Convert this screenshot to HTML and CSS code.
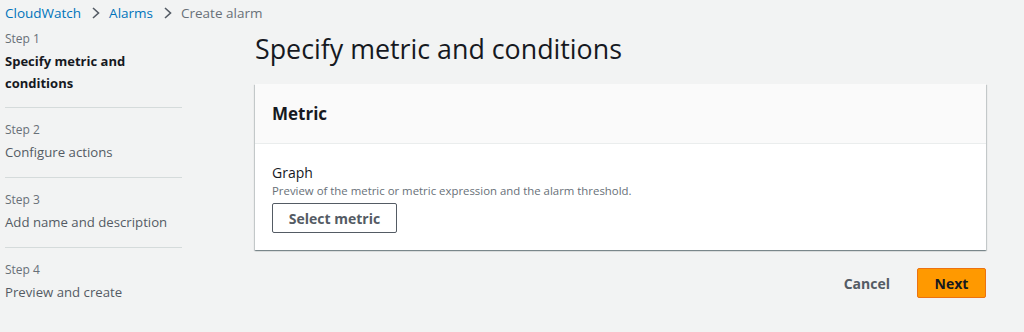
FILE: index.html
```html
<!DOCTYPE html>
<html lang="en">
<head>
<meta charset="utf-8">
<link rel="stylesheet" href="styles.css">
</head>
<body>
<nav class="crumbs">
  <a class="crumb-link" href="#">CloudWatch</a>
  <svg class="chev" width="10" height="14" viewBox="0 0 10 14"><path d="M2 2 L7.5 7 L2 12" fill="none" stroke="#545b64" stroke-width="1.6"/></svg>
  <a class="crumb-link" href="#">Alarms</a>
  <svg class="chev" width="10" height="14" viewBox="0 0 10 14"><path d="M2 2 L7.5 7 L2 12" fill="none" stroke="#545b64" stroke-width="1.6"/></svg>
  <span class="crumb-current">Create alarm</span>
</nav>
<div class="layout">
  <aside class="steps">
    <div class="step">
      <div class="step-num">Step 1</div>
      <div class="step-title active">Specify metric and conditions</div>
    </div>
    <div class="step">
      <div class="step-num">Step 2</div>
      <div class="step-title">Configure actions</div>
    </div>
    <div class="step">
      <div class="step-num">Step 3</div>
      <div class="step-title">Add name and description</div>
    </div>
    <div class="step last">
      <div class="step-num">Step 4</div>
      <div class="step-title">Preview and create</div>
    </div>
  </aside>
  <main class="content">
    <h1 class="page-title">Specify metric and conditions</h1>
    <section class="panel">
      <header class="panel-head"><h2>Metric</h2></header>
      <div class="panel-body">
        <div class="field-label">Graph</div>
        <div class="field-desc">Preview of the metric or metric expression and the alarm threshold.</div>
        <button class="btn-normal">Select metric</button>
      </div>
    </section>
    <div class="actions">
      <button class="btn-link">Cancel</button>
      <button class="btn-primary">Next</button>
    </div>
  </main>
</div>
</body>
</html>
```
FILE: styles.css
```css
* { box-sizing: border-box; }
html, body { margin: 0; padding: 0; }
body {
  background: #f2f3f3;
  font-family: "Open Sans", "Noto Sans", sans-serif;
  color: #16191f;
  width: 1024px;
  height: 332px;
  overflow: hidden;
}
.crumbs {
  display: flex;
  align-items: center;
  height: 26px;
  padding: 0 0 0 5px;
  font-size: 13.5px;
}
.crumb-link { color: #0073bb; text-decoration: none; }
.chev { margin: 0 8px 0 10px; }
.crumb-current { color: #687078; }
.layout {
  display: flex;
  padding-left: 5px;
}
.steps {
  width: 177px;
  flex: none;
}
.step {
  border-bottom: 1px solid #d5dbdb;
  padding: 5px 0 13px;
}
.step + .step { padding: 14px 0 14px; }
.step.last { border-bottom: none; }
.step-num {
  font-size: 12px;
  line-height: 16px;
  color: #687078;
  margin-bottom: 3px;
}
.step-title {
  font-size: 13.2px;
  line-height: 22px;
  color: #545b64;
}
.step-title.active { font-weight: 700; color: #16191f; font-size: 13px; }
.content {
  margin-left: 73px;
  width: 731px;
}
.page-title {
  font-size: 26.8px;
  font-weight: 400;
  line-height: 32px;
  margin: 7px 0 19px;
  color: #16191f;
}
.panel {
  background: #fff;
  box-shadow: 0 1px 1px 0 rgba(0,28,36,.3), 1px 1px 1px 0 rgba(0,28,36,.15), -1px 1px 1px 0 rgba(0,28,36,.15);
}
.panel-head {
  background: #fafafa;
  border-bottom: 1px solid #eaeded;
  height: 60px;
  display: flex;
  align-items: center;
  padding: 0 17px;
}
.panel-head h2 {
  margin: 0;
  font-size: 17px;
  font-weight: 700;
}
.panel-body {
  padding: 19px 17px 17px;
}
.field-label { font-size: 14px; line-height: 20px; }
.field-desc { font-size: 11.4px; line-height: 16px; color: #687078; margin-bottom: 4px; }
.btn-normal {
  font-family: inherit;
  font-size: 14px;
  font-weight: 700;
  color: #545b64;
  background: #fff;
  border: 1px solid #545b64;
  border-radius: 2px;
  height: 30px;
  width: 125px;
  padding: 0;
}
.actions {
  display: flex;
  justify-content: flex-end;
  align-items: center;
  margin-top: 18px;
  gap: 17px;
}
.btn-link {
  font-family: inherit;
  font-size: 14px;
  font-weight: 700;
  color: #545b64;
  background: none;
  border: none;
  padding: 0 10px 0 10px;
  height: 30px;
}
.btn-primary {
  font-family: inherit;
  font-size: 14px;
  font-weight: 700;
  color: #16191f;
  background: #ff9900;
  border: 1px solid #ec7211;
  border-radius: 2px;
  height: 30px;
  width: 69px;
  padding: 0;
}
```
